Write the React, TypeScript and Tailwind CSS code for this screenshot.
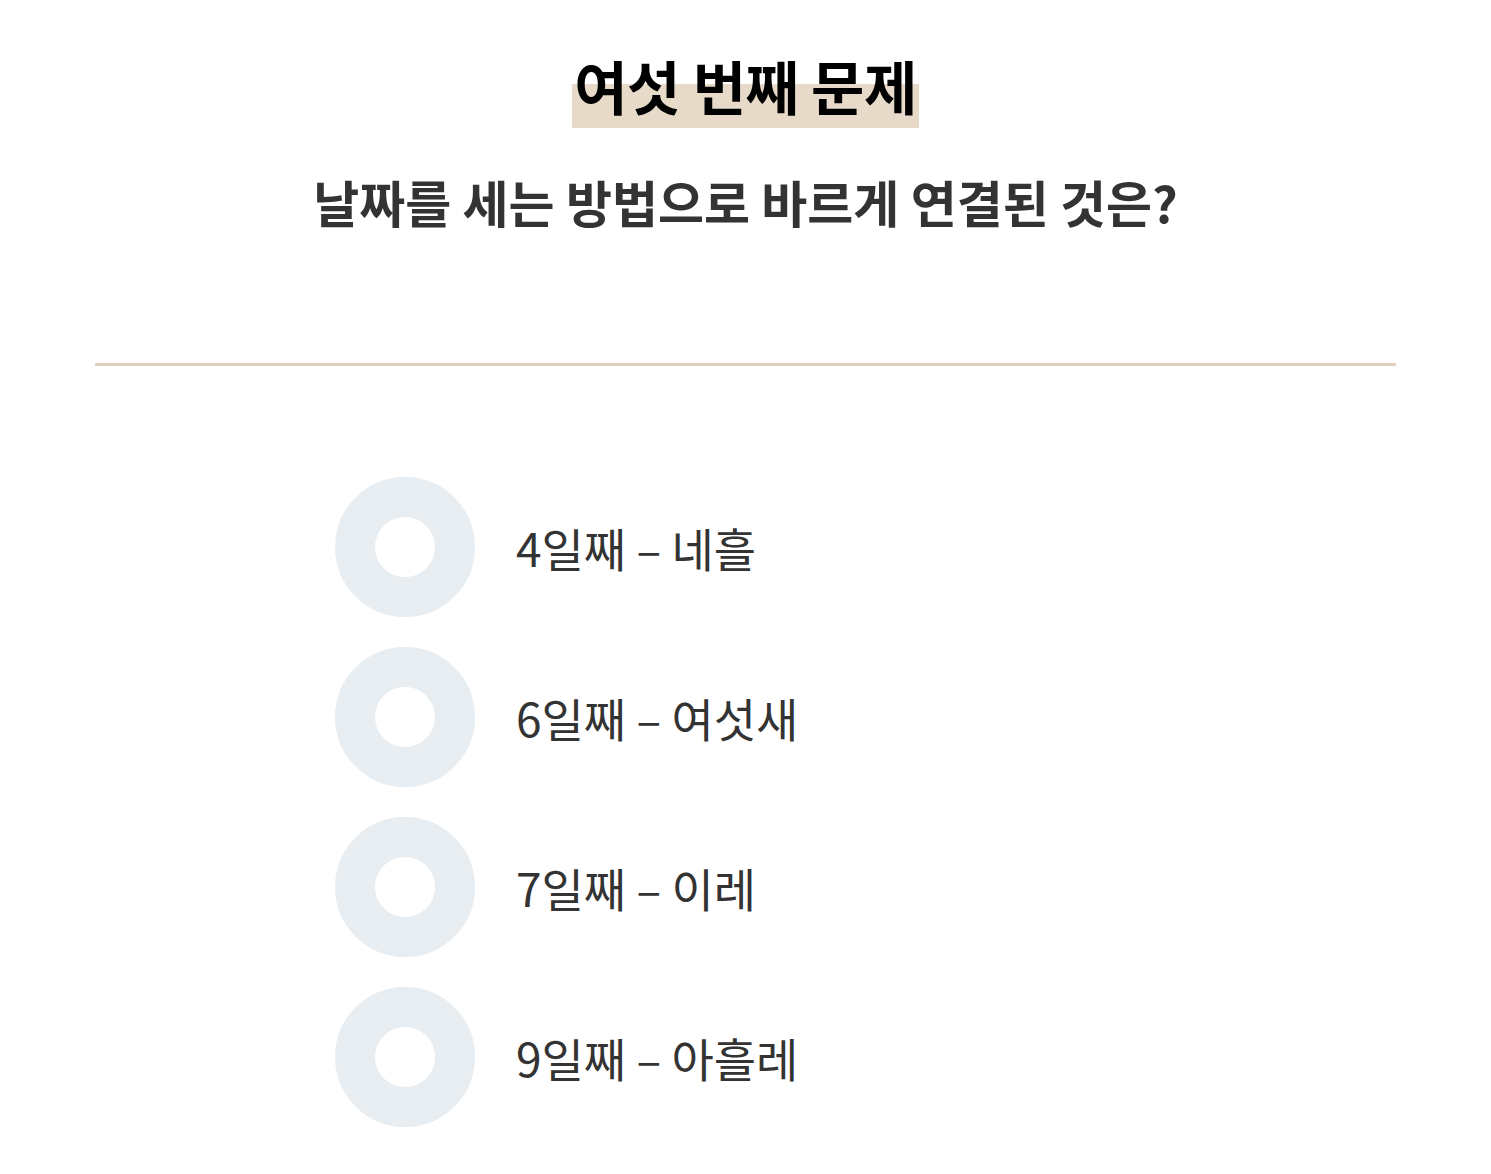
import React from 'react';

const options = ['4일째 – 네흘', '6일째 – 여섯새', '7일째 – 이레', '9일째 – 아흘레'];

function Option({ label }: { label: string }) {
  return (
    <li className="flex items-center gap-[41px]">
      <span className="block w-[140px] h-[140px] rounded-full border-[40px] border-[#e7edf1] bg-white shrink-0" />
      <span className="text-[46px] leading-none text-[#333] whitespace-pre">{label}</span>
    </li>
  );
}

export default function App() {
  return (
    <div
      className="min-h-screen bg-white"
      style={{ fontFamily: '"Noto Sans CJK KR", "Noto Sans", sans-serif' }}
    >
      <div className="pt-[56px] text-center">
        <h1 className="inline-block text-[58px] leading-none font-bold text-black tracking-[-0.5px] px-[2px] pb-[14px] bg-[linear-gradient(transparent_39%,#e8dac9_39%)]">
          여섯 번째 문제
        </h1>
        <p className="mt-[48px] text-[50px] leading-none font-bold text-[#333]">
          날짜를 세는 방법으로 바르게 연결된 것은?
        </p>
      </div>

      <div className="mx-[95px] mt-[137px] h-[3px] bg-[#e0cfbb]" />

      <ul className="w-[821px] mx-auto mt-[111px] flex flex-col gap-[30px] pb-[47px]">
        {options.map((o) => (
          <Option key={o} label={o} />
        ))}
      </ul>
    </div>
  );
}
